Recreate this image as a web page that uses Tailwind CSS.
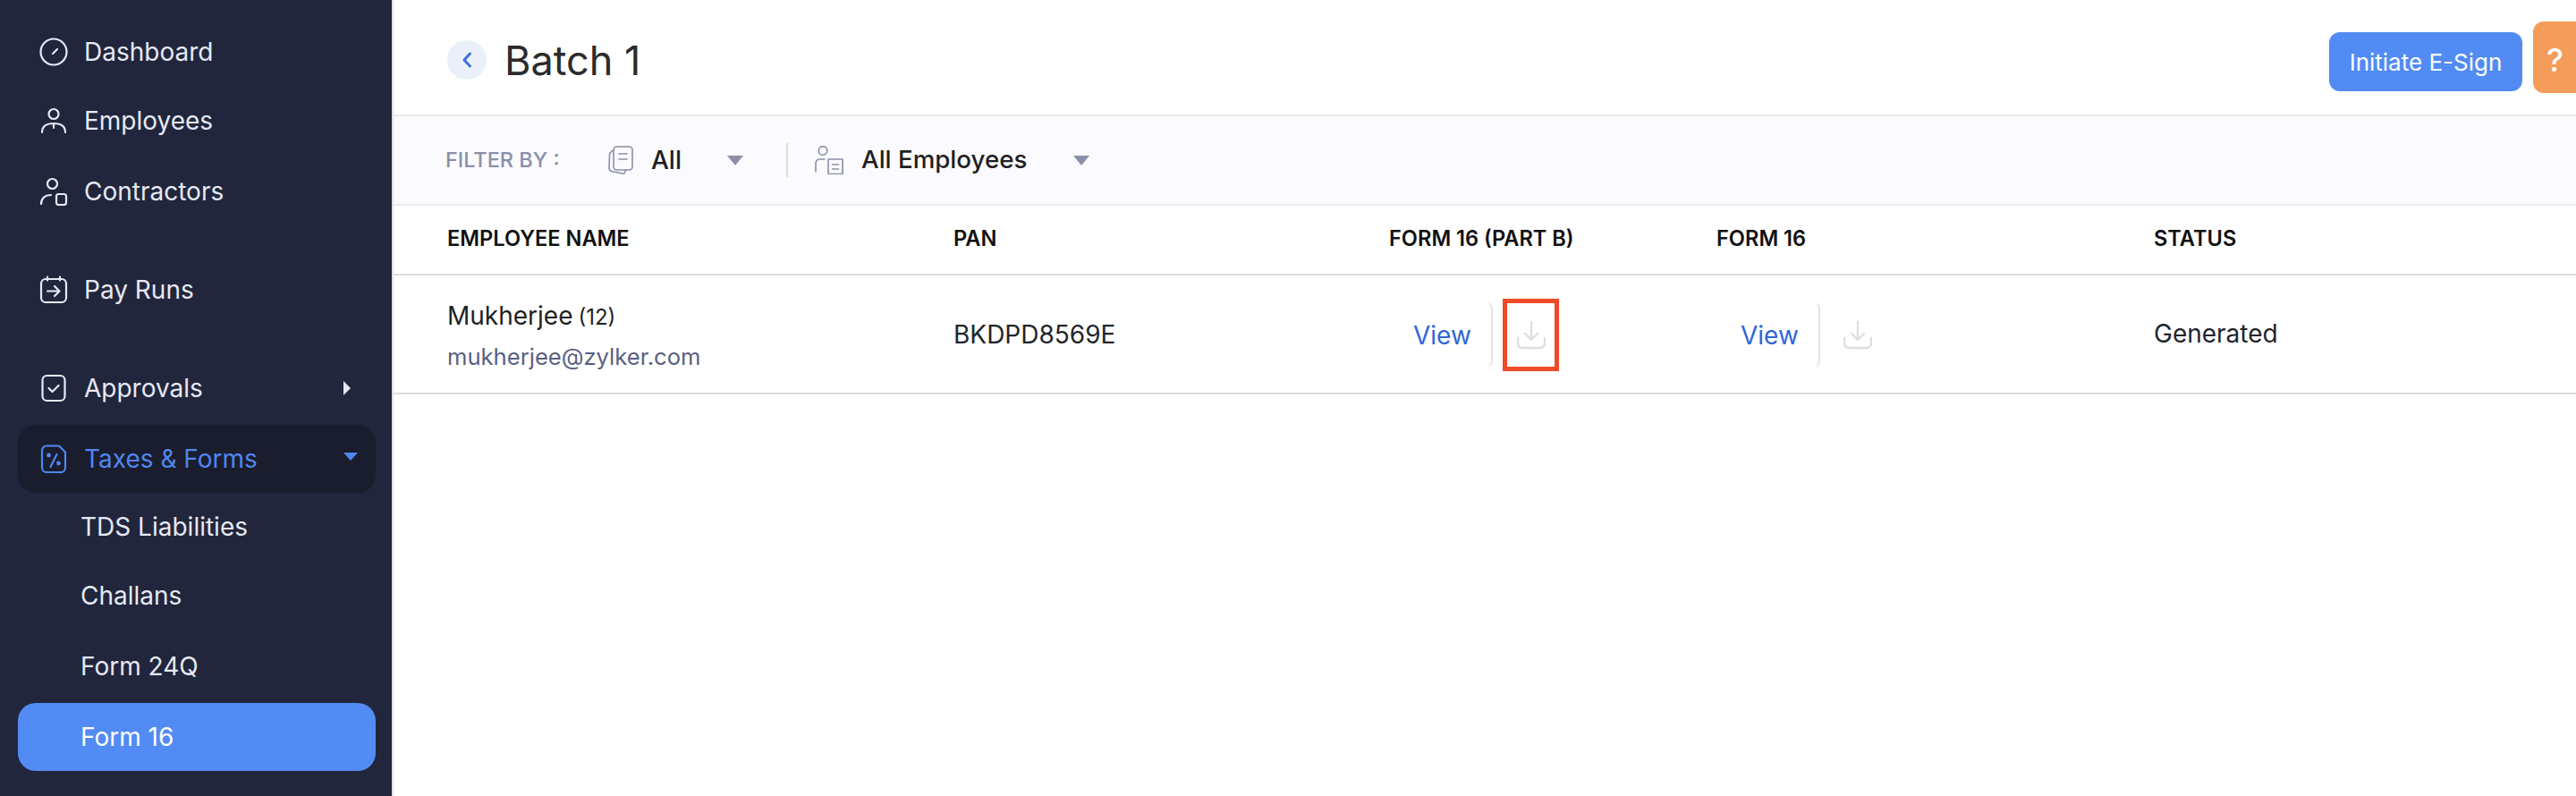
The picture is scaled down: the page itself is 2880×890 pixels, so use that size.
<!DOCTYPE html>
<html lang="en">
<head>
  <meta charset="UTF-8" />
  <title>Batch 1</title>
  <script src="https://cdn.jsdelivr.net/npm/@tailwindcss/browser@4"></script>
</head>
<body class="h-[890px] overflow-hidden bg-white font-['Inter',sans-serif]">
  <div class="flex h-[890px] relative">
    <!-- Sidebar -->
    <aside class="w-[440px] shrink-0 border-r-2 border-[#e0e0e0] bg-[#21263c] pl-5 pr-[18px] pt-5 text-[28px] text-[#e6e9f5]">
      <a class="flex h-[76px] items-center gap-[18px] pl-6">
        <svg class="w-8 h-8" viewBox="0 0 32 32" fill="none" stroke="currentColor" stroke-width="2.2" stroke-linecap="round"><circle cx="16" cy="16" r="14.5"/><path d="M15 18l5-5"/></svg>
        <span>Dashboard</span>
      </a>
      <a class="mt-px flex h-[76px] items-center gap-[18px] pl-6">
        <svg class="w-8 h-8" viewBox="0 0 32 32" fill="none" stroke="currentColor" stroke-width="2.2" stroke-linecap="round"><circle cx="16" cy="8.500" r="5.500"/><path d="M3 29c0-7 5-10 13-10s13 3 13 10M16 19v5"/></svg>
        <span>Employees</span>
      </a>
      <a class="mt-[3px] flex h-[76px] items-center gap-[18px] pl-6">
        <svg class="w-8 h-8" viewBox="0 0 32 32" fill="none" stroke="currentColor" stroke-width="2.2" stroke-linecap="round" stroke-linejoin="round"><circle cx="14.500" cy="7.500" r="5.500"/><path d="M2 30c0-6 4-10 11-10"/><rect x="19" y="19" width="11" height="12" rx="2.500"/></svg>
        <span>Contractors</span>
      </a>
      <a class="mt-[34px] flex h-[76px] items-center gap-[18px] pl-6">
        <svg class="w-8 h-8" viewBox="0 0 32 32" fill="none" stroke="currentColor" stroke-width="2.2" stroke-linecap="round" stroke-linejoin="round"><rect x="2" y="4" width="28" height="26" rx="5"/><path d="M9 1.500v4M23 1.500v4M9 17.500h13M17 12l5.500 5.500L17 23"/></svg>
        <span>Pay Runs</span>
      </a>
      <a class="mt-[34px] flex h-[76px] items-center gap-[18px] pl-6">
        <svg class="w-8 h-8" viewBox="0 0 32 32" fill="none" stroke="currentColor" stroke-width="2.2" stroke-linecap="round" stroke-linejoin="round"><rect x="3.500" y="2" width="25" height="28" rx="5"/><path d="M10.500 16l4 4 7-7"/></svg>
        <span>Approvals</span>
        <span class="ml-auto mr-7 h-0 w-0 border-y-[8px] border-l-[8px] border-y-transparent border-l-[#e6e9f5]"></span>
      </a>
      <a class="mt-[3px] flex h-[76px] items-center gap-[18px] rounded-[20px] bg-[#1a1d2e] pl-6 text-[#4f86ee]">
        <svg class="w-8 h-8" viewBox="0 0 32 32" fill="none" stroke="currentColor" stroke-width="2.2" stroke-linecap="round" stroke-linejoin="round"><path d="M8 1.500h14l7 7V26a5 5 0 0 1-5 5H8a5 5 0 0 1-5-5V6.500a5 5 0 0 1 5-5z"/><path d="M19.500 11l-7 14"/><circle cx="10.500" cy="12" r="1.300" fill="currentColor"/><circle cx="21.500" cy="21" r="1.300" fill="currentColor"/></svg>
        <span>Taxes &amp; Forms</span>
        <span class="ml-auto mr-5 mb-[5px] h-0 w-0 border-x-[8px] border-t-[9px] border-x-transparent border-t-[#4f86ee]"></span>
      </a>
      <a class="flex h-[76px] items-center pl-[70px]">TDS Liabilities</a>
      <a class="mt-px flex h-[76px] items-center pl-[70px]">Challans</a>
      <a class="mt-[3px] flex h-[76px] items-center pl-[70px]">Form 24Q</a>
      <a class="mt-[3px] flex h-[76px] items-center rounded-[20px] bg-[#528bf3] pl-[70px] text-white">Form 16</a>
    </aside>

    <!-- Main -->
    <main class="flex-1 min-w-0">
      <header class="flex h-[130px] items-center border-b-2 border-[#ececec] pl-[60px] pr-[60px] pt-[6px]">
        <button class="flex h-11 w-11 items-center justify-center rounded-full bg-[#e9f0fa]">
          <svg class="w-[14px] h-5" viewBox="0 0 14 20" fill="none" stroke="#3b71d6" stroke-width="3" stroke-linecap="round" stroke-linejoin="round"><path d="M10.500 3L4 10l6.500 7"/></svg>
        </button>
        <h1 class="ml-5 text-[45px] leading-none text-[#2b2b2b]">Batch 1</h1>
        <button class="ml-auto mt-1 flex h-[66px] w-[216px] items-center justify-center rounded-[12px] bg-[#528bf3] text-[26px] text-white">Initiate E-Sign</button>
      </header>

      <div class="flex h-[100px] items-center border-b-2 border-[#ececec] bg-[#fafaff] pl-[58px]">
        <span class="w-[182px] text-[23.500px] font-medium text-[#8b8fa8]">FILTER BY :</span>
        <svg class="w-[28px] h-[32px]" viewBox="0 0 28 32" fill="none" stroke="#8b8fa8" stroke-width="1.600" stroke-linecap="round" stroke-linejoin="round"><rect x="6" y="1" width="21" height="26" rx="3.500"/><path d="M12 9h9M12 15h9M6 5C3 6 2 7 1.500 10L1 25c0 2 1 3 3 3.500L16 31c2 .3 3-.5 3.500-4"/></svg>
        <span class="ml-5 w-[85px] text-[28px] font-medium text-[#1f1f1f]">All</span>
        <span class="h-0 w-0 border-x-[9px] border-t-[11px] border-x-transparent border-t-[#8b8fa8]"></span>
        <span class="ml-[48px] h-[38px] w-0.5 bg-[#dcdde2]"></span>
        <svg class="ml-[30px] w-[32px] h-[32px]" viewBox="0 0 32 32" fill="none" stroke="#8b8fa8" stroke-width="1.600" stroke-linecap="round" stroke-linejoin="round"><circle cx="9" cy="5.500" r="4.800"/><path d="M1 29V20c0-3 2-5 5-5h5"/><rect x="15" y="15" width="16" height="16.500"/><path d="M19.500 21h7M19.500 26h7"/></svg>
        <span class="ml-5 w-[237px] text-[27.700px] font-medium text-[#1f1f1f]">All Employees</span>
        <span class="h-0 w-0 border-x-[9px] border-t-[11px] border-x-transparent border-t-[#8b8fa8]"></span>
      </div>

      <!-- Table -->
      <div class="grid h-[78px] grid-cols-[566px_487px_366px_1fr] items-center border-b-2 border-[#dddddd] pl-[60px] pb-[2px] text-[23.600px] font-semibold text-[#111111]">
        <span>EMPLOYEE NAME</span>
        <span>PAN</span>
        <span>FORM 16 (PART B)</span>
        <div class="grid grid-cols-[489px_1fr]"><span>FORM 16</span><span>STATUS</span></div>
      </div>
      <div class="grid h-[133px] grid-cols-[566px_487px_366px_1fr] items-center border-b-2 border-[#dddddd] pl-[60px]">
        <div class="pt-[5px]">
          <p class="text-[28px] leading-[34px] text-[#1f1f1f]">Mukherjee <span class="-ml-[2px] text-[24px]">(12)</span></p>
          <p class="mt-[10px] text-[25.600px] leading-[34px] text-[#5a5f80]">mukherjee@zylker.com</p>
        </div>
        <span class="text-[28px] text-[#22252c]">BKDPD8569E</span>
        <div class="flex items-center pl-[27px] pt-[2px]">
          <a class="w-[81px] text-[28px] text-[#2f66d8]">View</a>
          <span class="h-[73px] w-2 rounded-r-[8px] border-r-2 border-[#dfe1ec]"></span>
          <span class="ml-[11px] flex h-[81px] w-[63px] shrink-0 items-center justify-center border-[5px] border-[#f04a28]">
            <svg class="w-8 h-8" viewBox="0 0 32 32" fill="none" stroke="#dedede" stroke-width="2.400" stroke-linecap="round" stroke-linejoin="round"><path d="M16 1v19M9 14l7 7 7-7M1 19v6a5 5 0 0 0 5 5h20a5 5 0 0 0 5-5v-6"/></svg>
          </span>
        </div>
        <div class="grid grid-cols-[489px_1fr] items-center">
          <div class="flex items-center pl-[27px] pt-[2px]">
            <a class="w-[81px] text-[28px] text-[#2f66d8]">View</a>
            <span class="h-[73px] w-2 rounded-r-[8px] border-r-2 border-[#dfe1ec]"></span>
            <svg class="ml-[26px] w-8 h-8" viewBox="0 0 32 32" fill="none" stroke="#dedede" stroke-width="2.400" stroke-linecap="round" stroke-linejoin="round"><path d="M16 1v19M9 14l7 7 7-7M1 19v6a5 5 0 0 0 5 5h20a5 5 0 0 0 5-5v-6"/></svg>
          </div>
          <span class="pb-[2px] text-[28px] text-[#22252c]">Generated</span>
        </div>
      </div>
    </main>

    <!-- Help tab, floats over the header -->
    <div class="absolute right-0 top-6 flex h-20 w-12 items-center rounded-l-[12px] bg-[#f49c5a] pl-[15px] pt-[5px] text-[36px] font-medium text-white">?</div>
  </div>
</body>
</html>
